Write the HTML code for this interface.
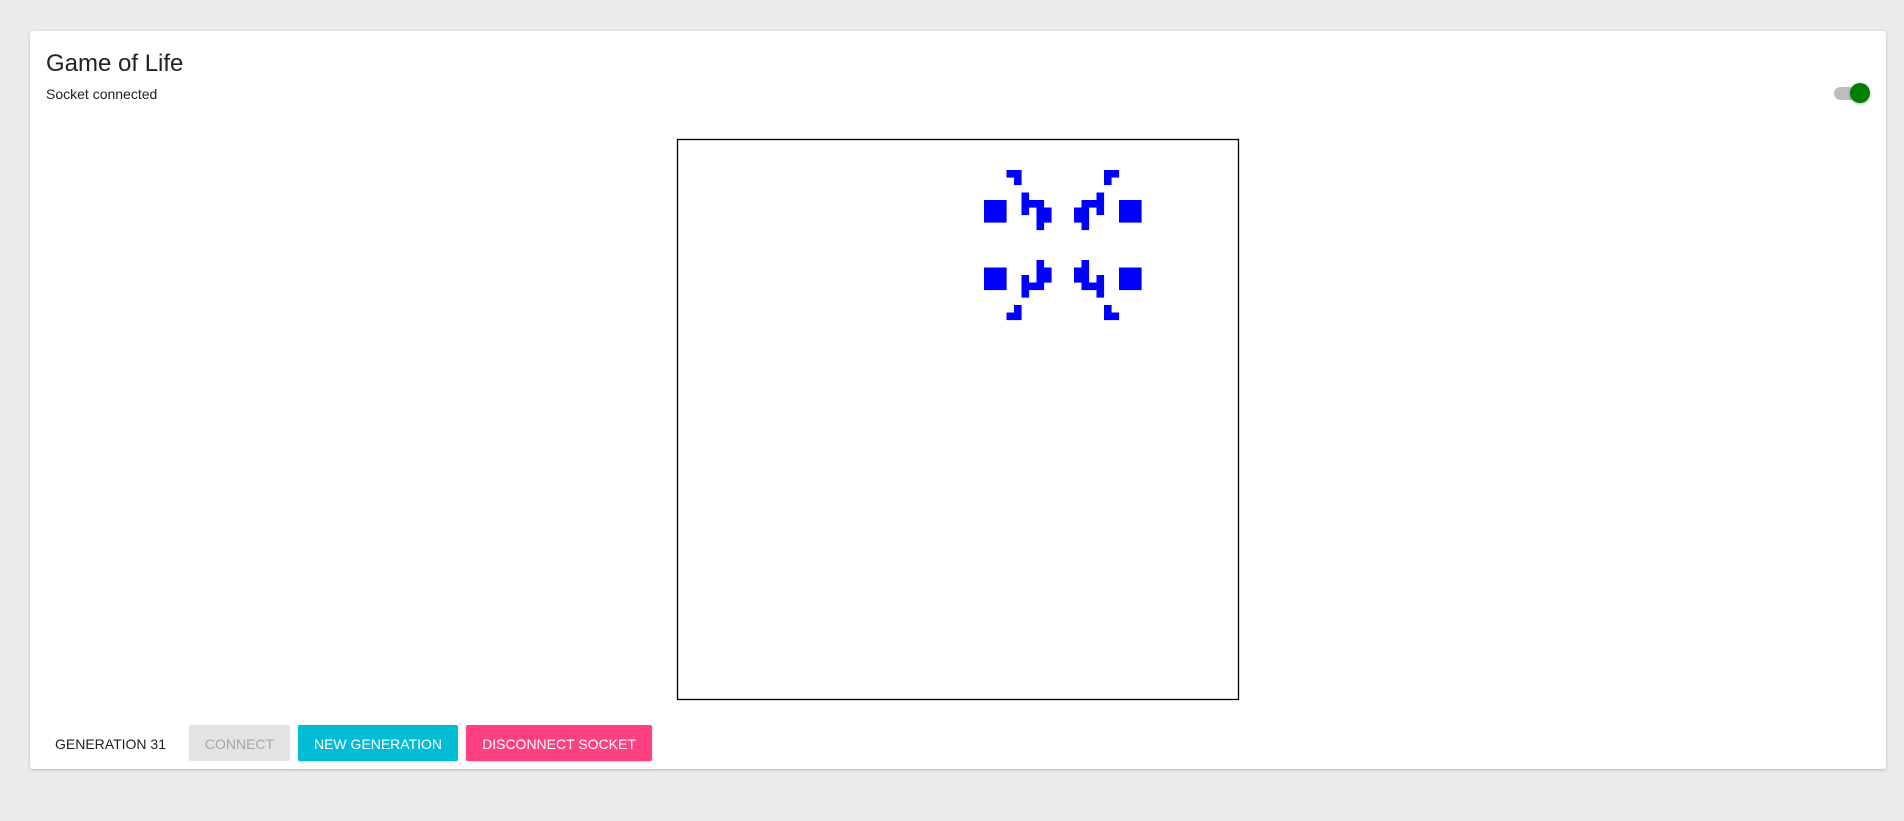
<!DOCTYPE html>
<html><head><style>
body{margin:0;width:1904px;height:821px;background:#ebebeb;font-family:"Liberation Sans",sans-serif;position:relative;overflow:hidden}
.card{position:absolute;left:30px;top:31px;width:1856px;height:738px;background:#fff;border-radius:3px;box-shadow:0 1px 3px rgba(0,0,0,.2)}
.t{position:absolute;left:46px;top:50px;font-size:24px;color:#222}
.s{position:absolute;left:46px;top:86px;font-size:14px;color:#222}
.trk{position:absolute;left:1834px;top:87px;width:28px;height:13px;border-radius:7px;background:#bdbdbd}
.th{position:absolute;left:1850px;top:83px;width:20px;height:20px;border-radius:50%;background:#008000;box-shadow:0 1px 3px rgba(0,0,0,.3)}
.g{position:absolute;left:55px;top:736px;font-size:14px;color:#222;white-space:nowrap}
.b{position:absolute;top:725px;height:36px;line-height:38px;text-align:center;font-size:14px;border-radius:2px;color:#fff;white-space:nowrap}
</style></head><body>
<div class="card"></div>
<div class="t">Game of Life</div>
<div class="s">Socket connected</div>
<div class="trk"></div><div class="th"></div>
<svg style="position:absolute;left:0;top:0" width="1904" height="821">
<rect x="677.5" y="139.5" width="561" height="560" fill="none" stroke="#000" stroke-width="1.3"/>
<g fill="#0000ff" id="q">
</g>
</svg>
<div class="g">GENERATION 31</div>
<div class="b" style="left:189px;width:101px;background:#e3e3e3;color:#a6a6a6">CONNECT</div>
<div class="b" style="left:298px;width:160px;background:#00bcd4;box-shadow:0 1px 2px rgba(0,0,0,.2)">NEW GENERATION</div>
<div class="b" style="left:466px;width:186px;background:#ff4081;box-shadow:0 1px 2px rgba(0,0,0,.2)">DISCONNECT SOCKET</div>
<script>
var base=[[3,0],[4,0],[4,1],[0,4],[1,4],[2,4],[0,5],[1,5],[2,5],[0,6],[1,6],[2,6],[5,3],[5,4],[6,4],[7,4],[5,5],[7,5],[8,5],[7,6],[8,6],[7,7]];
var s="",set={};
base.forEach(function(p){[[p[0],p[1]],[20-p[0],p[1]],[p[0],19-p[1]],[20-p[0],19-p[1]]].forEach(function(c){var k=c[0]+","+c[1];if(!set[k]){set[k]=1;s+='<rect x="'+(984+c[0]*7.5)+'" y="'+(170+c[1]*7.5)+'" width="7.6" height="7.6"/>';}});});
document.getElementById("q").innerHTML=s;
</script>
</body></html>
